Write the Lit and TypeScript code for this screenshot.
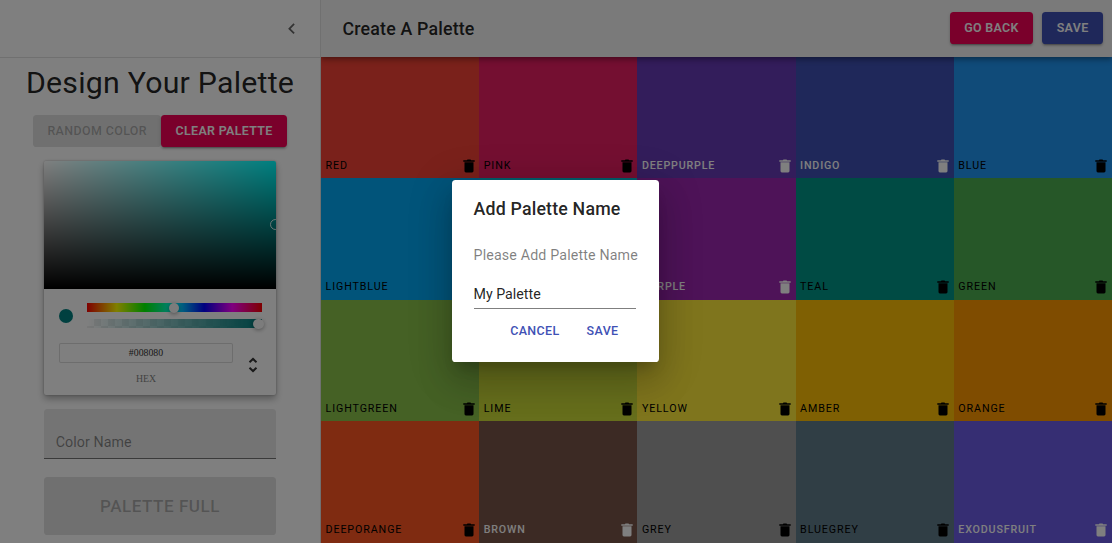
import { LitElement, html, css, svg } from "lit";
import { customElement, property } from "lit/decorators.js";

interface Swatch {
  name: string;
  color: string;
  light?: boolean;
}

const SWATCHES: Swatch[] = [
  { name: "red", color: "#f44336" },
  { name: "pink", color: "#e91e63" },
  { name: "deeppurple", color: "#673ab7", light: true },
  { name: "indigo", color: "#3f51b5", light: true },
  { name: "blue", color: "#2196f3" },
  { name: "lightblue", color: "#03a9f4" },
  { name: "", color: "#00bcd4" },
  { name: "purple", color: "#9c27b0", light: true },
  { name: "teal", color: "#009688" },
  { name: "green", color: "#4caf50" },
  { name: "lightgreen", color: "#8bc34a" },
  { name: "lime", color: "#cddc39" },
  { name: "yellow", color: "#ffeb3b" },
  { name: "amber", color: "#ffc107" },
  { name: "orange", color: "#ff9800" },
  { name: "deeporange", color: "#ff5722" },
  { name: "brown", color: "#795548", light: true },
  { name: "grey", color: "#9e9e9e" },
  { name: "bluegrey", color: "#607d8b" },
  { name: "exodusfruit", color: "#6c5ce7", light: true },
];

@customElement("color-box")
class ColorBox extends LitElement {
  @property() name = "";
  @property({ type: Boolean, reflect: true }) light = false;

  static styles = css`
    :host {
      display: flex;
      align-items: flex-end;
      justify-content: space-between;
      box-sizing: border-box;
      min-width: 0;
      padding: 0 4.6px 3.3px 4.5px;
      color: #000;
      font: 400 10.7px/18px Roboto, sans-serif;
      letter-spacing: 0.9px;
      text-transform: uppercase;
    }
    :host([light]) {
      color: #fff;
      font-weight: 500;
      letter-spacing: 0.82px;
    }
    .icon {
      display: block;
      width: 12px;
      height: 14px;
      margin-bottom: 2px;
      fill: currentColor;
    }
  `;

  render() {
    return html`<span>${this.name}</span>
      <svg class="icon" viewBox="0 0 12 14">
        ${svg`<path d="M.3 1.3h3.5L4.5.5h3l.7.8h3.5v1.5H.3zM1.5 3.2h9v8.8a1.4 1.4 0 0 1-1.4 1.4H2.9A1.4 1.4 0 0 1 1.5 12z"/>`}
      </svg>`;
  }
}

@customElement("color-picker")
class ColorPicker extends LitElement {
  static styles = css`
    :host {
      display: block;
      width: 231.6px;
      border-radius: 2px;
      background: #fff;
      box-shadow: 0 0 2px rgba(0, 0, 0, 0.3), 0 4px 7px rgba(0, 0, 0, 0.3);
    }
    .saturation {
      position: relative;
      height: 128px;
      overflow: hidden;
      border-radius: 2px 2px 0 0;
      background: linear-gradient(to top, #000, transparent),
        linear-gradient(to right, #fff, transparent), #00ffff;
    }
    .pointer {
      position: absolute;
      left: 226px;
      top: 58px;
      box-sizing: border-box;
      width: 11px;
      height: 11px;
      border: 1.3px solid rgba(255, 255, 255, 0.85);
      border-radius: 50%;
    }
    .body {
      padding: 14px 14px 11px;
    }
    .controls {
      display: flex;
      align-items: center;
    }
    .preview {
      width: 14px;
      height: 14px;
      margin: 1px 13.5px 0 1px;
      border-radius: 50%;
      background: #008080;
    }
    .bars {
      display: flex;
      flex: 1;
      flex-direction: column;
      gap: 7px;
    }
    .bar {
      position: relative;
      height: 9px;
    }
    .hue {
      background: linear-gradient(
        to right,
        #f00 0%,
        #ff0 17%,
        #0f0 33%,
        #0ff 50%,
        #00f 67%,
        #f0f 83%,
        #f00 100%
      );
    }
    .alpha {
      background: linear-gradient(to right, rgba(0, 128, 128, 0), #008080),
        repeating-conic-gradient(#f0f0f0 0 25%, #fff 0 50%) 0 0 / 14px 14px;
    }
    .knob {
      position: absolute;
      top: -0.5px;
      width: 10.7px;
      height: 10.7px;
      border-radius: 50%;
      background: #f8f8f8;
      box-shadow: 0 1px 4px rgba(0, 0, 0, 0.37);
    }
    .mid {
      left: 82px;
    }
    .end {
      left: 166.5px;
    }
    .fields {
      display: flex;
      padding-top: 15px;
    }
    .field {
      flex: 1;
      padding-left: 1px;
      font: 9.8px/11px "Liberation Serif", serif;
      text-align: center;
    }
    .value {
      box-sizing: border-box;
      height: 20px;
      border-radius: 2px;
      box-shadow: inset 0 0 0 1px #dadada;
      color: #333;
      line-height: 20px;
    }
    .label {
      margin-top: 10px;
      color: #868686;
    }
    .arrows {
      width: 14px;
      height: 18px;
      margin: 13px 1.5px 0 13.5px;
      fill: none;
      stroke: #333;
      stroke-width: 2;
    }
  `;

  render() {
    return html`
      <div class="saturation"><div class="pointer"></div></div>
      <div class="body">
        <div class="controls">
          <div class="preview"></div>
          <div class="bars">
            <div class="bar hue"><div class="knob mid"></div></div>
            <div class="bar alpha"><div class="knob end"></div></div>
          </div>
        </div>
        <div class="fields">
          <div class="field">
            <div class="value">#008080</div>
            <div class="label">HEX</div>
          </div>
          <svg class="arrows" viewBox="0 0 14 18">
            ${svg`<path d="M3.5 6.2 7 2.9 10.5 6.2M3.5 11.8 7 15.1 10.5 11.8"/>`}
          </svg>
        </div>
      </div>
    `;
  }
}

@customElement("app-root")
class AppRoot extends LitElement {
  static styles = css`
    :host {
      display: block;
      position: relative;
      height: 543px;
      overflow: hidden;
      background: #fff;
      color: rgba(0, 0, 0, 0.87);
      font-family: Roboto, sans-serif;
    }
    .page {
      display: grid;
      grid-template-columns: 321px 1fr;
      height: 100%;
    }
    .drawer {
      display: flex;
      flex-direction: column;
      align-items: center;
      box-sizing: border-box;
      height: 543px;
      border-right: 1px solid #e0e0e0;
    }
    .drawer-head {
      display: flex;
      align-items: center;
      justify-content: flex-end;
      align-self: stretch;
      box-sizing: border-box;
      height: 58px;
      padding-right: 18px;
      border-bottom: 1px solid #e0e0e0;
    }
    .chevron {
      width: 21.4px;
      height: 21.4px;
      fill: rgba(0, 0, 0, 0.6);
    }
    .heading {
      margin: 7px 0 0;
      font-size: 30.3px;
      font-weight: 400;
      line-height: 36px;
      letter-spacing: 0.22px;
      white-space: nowrap;
    }
    .actions {
      display: flex;
      margin: 14px 0 14px;
    }
    .btn {
      display: flex;
      align-items: center;
      justify-content: center;
      box-sizing: border-box;
      height: 32px;
      padding: 0 14.25px 1px;
      border-radius: 3.6px;
      font-size: 12.46px;
      font-weight: 500;
      letter-spacing: 0.38px;
      text-transform: uppercase;
      white-space: nowrap;
    }
    .raised {
      color: #fff;
      font-weight: 600;
      letter-spacing: 0.32px;
      box-shadow: 0 3px 1px -2px rgba(0, 0, 0, 0.2),
        0 2px 2px rgba(0, 0, 0, 0.14), 0 1px 4px rgba(0, 0, 0, 0.12);
    }
    .secondary {
      background: #f50057;
    }
    .primary {
      background: #3f51b5;
    }
    .disabled {
      background: #e0e0e0;
      color: rgba(0, 0, 0, 0.26);
    }
    .name-field {
      display: flex;
      align-items: center;
      box-sizing: border-box;
      width: 231.6px;
      height: 50px;
      margin-top: 14px;
      padding: 16px 11.5px 0;
      border-bottom: 1px solid rgba(0, 0, 0, 0.5);
      border-radius: 3.6px 3.6px 0 0;
      background: #e8e8e8;
      color: rgba(0, 0, 0, 0.44);
      font-size: 14.24px;
      letter-spacing: 0.08px;
    }
    .full {
      width: 231.6px;
      height: 58px;
      margin-top: 18px;
      padding-bottom: 0;
      font-size: 17.1px;
      letter-spacing: 0.5px;
    }
    .main {
      display: grid;
      grid-template-rows: 57px 1fr;
    }
    .appbar {
      display: flex;
      align-items: center;
      gap: 9px;
      position: relative;
      z-index: 1;
      padding: 0 9px 1px 21.5px;
      background: #f5f5f5;
      box-shadow: 0 2px 4px -1px rgba(0, 0, 0, 0.2),
        0 4px 5px rgba(0, 0, 0, 0.14), 0 1px 9px rgba(0, 0, 0, 0.12);
      clip-path: inset(0 0 -14px 0);
    }
    .appbar .btn {
      padding-left: 14.5px;
      padding-right: 14.5px;
    }
    .title {
      flex: 1;
      margin: 0;
      font-size: 17.8px;
      font-weight: 500;
      letter-spacing: 0.18px;
    }
    .swatches {
      display: grid;
      grid-template-columns: repeat(5, 1fr);
      grid-template-rows: repeat(4, 121.4px);
    }
    .overlay {
      display: flex;
      align-items: center;
      justify-content: center;
      position: absolute;
      inset: 0;
      z-index: 2;
      padding: 0 1px 1px 0;
      background: rgba(0, 0, 0, 0.5);
    }
    .dialog {
      box-sizing: border-box;
      width: 207px;
      height: 182px;
      padding: 17px 0 0 21.5px;
      border-radius: 3.6px;
      background: #fff;
      box-shadow: 0 10px 13px -6px rgba(0, 0, 0, 0.2),
        0 21px 34px 3px rgba(0, 0, 0, 0.14),
        0 8px 41px 7px rgba(0, 0, 0, 0.12);
      white-space: nowrap;
    }
    .dialog-title {
      margin: 0;
      font-size: 17.8px;
      font-weight: 500;
      line-height: 23px;
      letter-spacing: 0.18px;
    }
    .hint {
      margin: 24px 0 0;
      color: rgba(0, 0, 0, 0.5);
      font-size: 14.24px;
      line-height: 22px;
      letter-spacing: 0.15px;
    }
    .entry {
      box-sizing: border-box;
      width: 162px;
      height: 28px;
      margin-top: 15px;
      border-bottom: 1px solid rgba(0, 0, 0, 0.5);
      font-size: 14.24px;
      line-height: 26px;
    }
    .dialog-actions {
      display: flex;
      gap: 13px;
      justify-content: flex-end;
      padding: 6px 33.5px 0 0;
    }
    .text {
      padding: 0 7px 1px;
      color: #3f51b5;
    }
  `;

  render() {
    return html`
      <div class="page">
        <aside class="drawer">
          <div class="drawer-head">
            <svg class="chevron" viewBox="0 0 24 24">
              ${svg`<path d="M15.41 7.41 14 6l-6 6 6 6 1.41-1.41L10.83 12z"/>`}
            </svg>
          </div>
          <h4 class="heading">Design Your Palette</h4>
          <div class="actions">
            <div class="btn disabled">Random Color</div>
            <div class="btn raised secondary">Clear Palette</div>
          </div>
          <color-picker></color-picker>
          <div class="name-field">Color Name</div>
          <div class="btn disabled full">Palette Full</div>
        </aside>
        <main class="main">
          <header class="appbar">
            <h6 class="title">Create A Palette</h6>
            <div class="btn raised secondary">Go Back</div>
            <div class="btn raised primary">Save</div>
          </header>
          <section class="swatches">
            ${SWATCHES.map(
              (s) => html`<color-box
                .name=${s.name}
                ?light=${s.light}
                style="background:${s.color}"
              ></color-box>`
            )}
          </section>
        </main>
      </div>
      <div class="overlay">
        <div class="dialog">
          <h6 class="dialog-title">Add Palette Name</h6>
          <p class="hint">Please Add Palette Name</p>
          <div class="entry">My Palette</div>
          <div class="dialog-actions">
            <div class="btn text">Cancel</div>
            <div class="btn text">Save</div>
          </div>
        </div>
      </div>
    `;
  }
}
